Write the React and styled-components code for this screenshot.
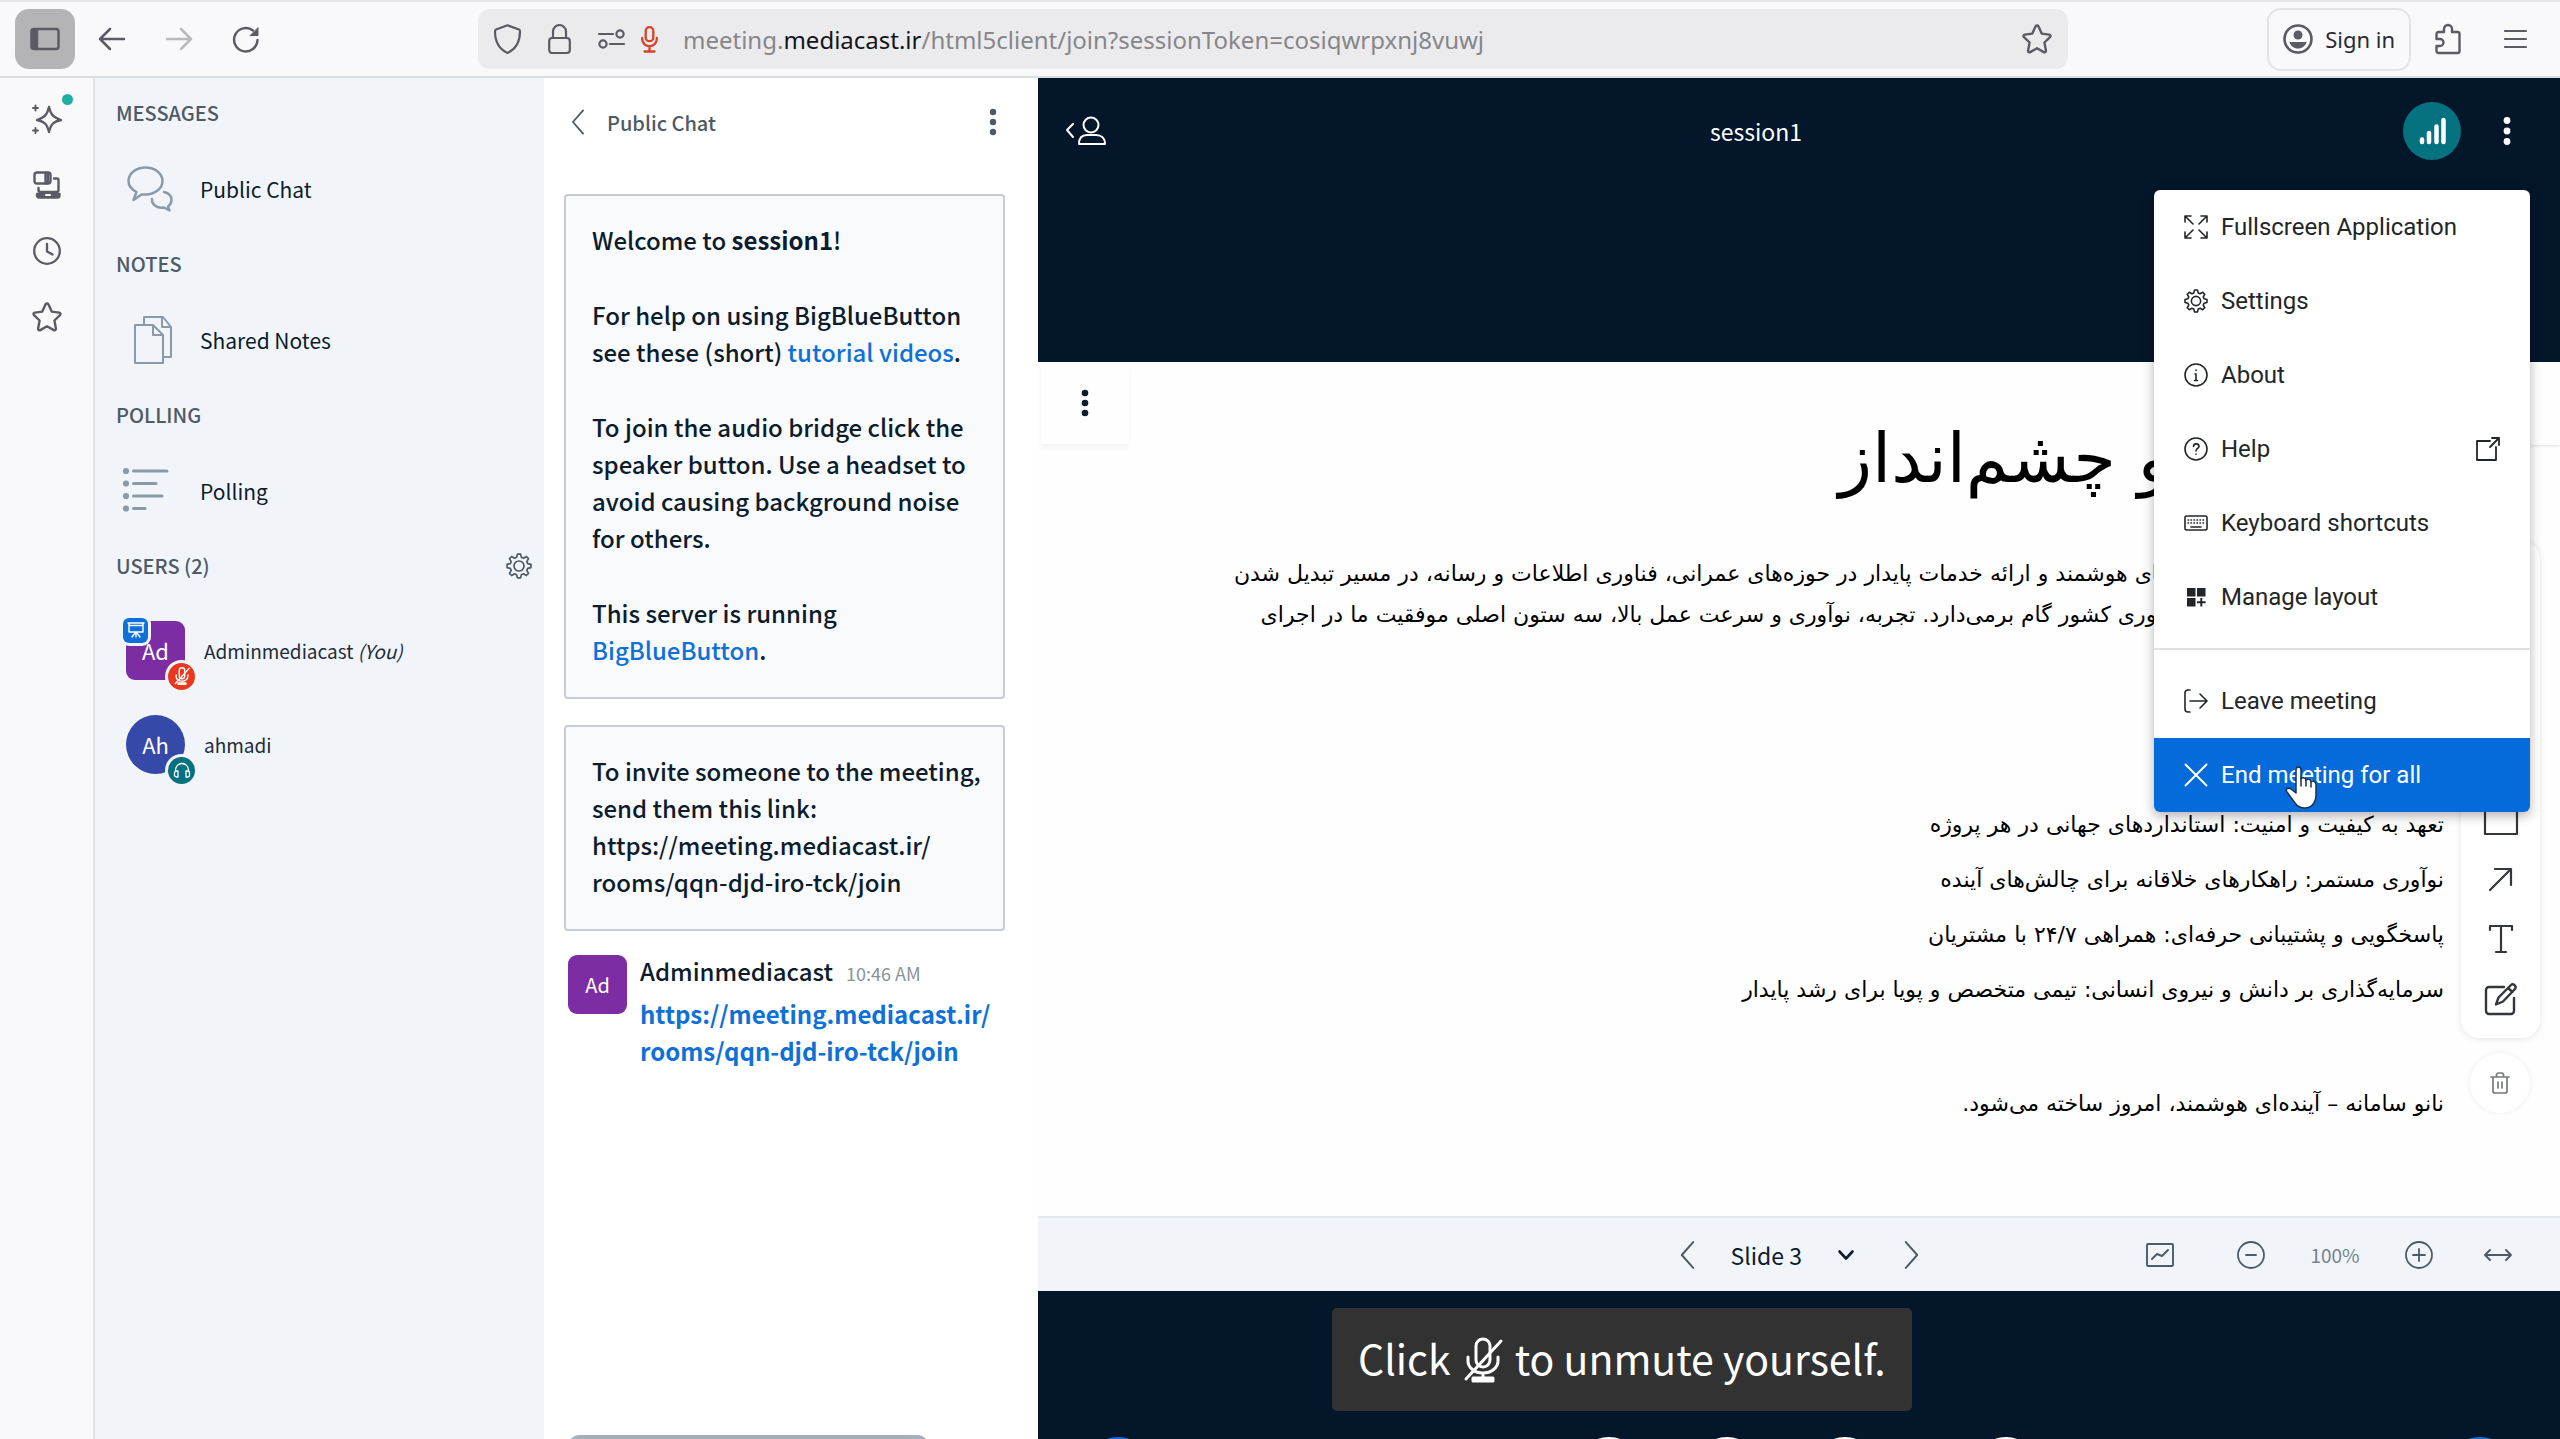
import React from 'react';
import styled, { createGlobalStyle, css } from 'styled-components';

const uiFont = `"Noto Sans CJK SC", "Noto Sans", sans-serif`;
const browserFont = `"Noto Sans", "Open Sans", sans-serif`;
const menuFont = `Roboto, "Liberation Sans", sans-serif`;
const slideFont = `"DejaVu Sans", sans-serif`;

const GlobalStyle = createGlobalStyle`
    * {
        box-sizing: border-box;
    }
    body {
        margin: 0;
        overflow: hidden;
        background: #f9f9fb;
        font-family: ${uiFont};
    }
    button {
        padding: 0;
        border: none;
        background: none;
        font: inherit;
        color: inherit;
        cursor: pointer;
    }
    h1, h2, p, ul {
        margin: 0;
        padding: 0;
        font-weight: inherit;
    }
    svg {
        display: block;
        flex: none;
        overflow: visible;
    }
`;

const Page = styled.div`
    height: 100vh;
    display: flex;
    flex-direction: column;
`;

/* ---------- browser toolbar ---------- */

const BrowserBar = styled.header`
    flex: none;
    height: 78px;
    display: flex;
    align-items: center;
    gap: 7px;
    padding: 0 15px;
    border-top: 2px solid #e8e8ea;
    border-bottom: 2px solid #dcdde0;
    background: #f9f9fb;
    color: #5b5b66;
    font-family: ${browserFont};
`;

const BrowserButton = styled.button`
    flex: none;
    width: 60px;
    height: 60px;
    display: flex;
    align-items: center;
    justify-content: center;
    border-radius: 14px;
    background: ${props => (props.$active ? '#b4b4b6' : 'transparent')};
    opacity: ${props => (props.$faded ? 0.4 : 1)};
`;

const AddressBar = styled.div`
    flex: 1;
    min-width: 0;
    height: 60px;
    display: flex;
    align-items: center;
    margin: 0 192px 0 195px;
    padding: 0 16px;
    border-radius: 12px;
    background: #ebebed;
`;

const AddressIcons = styled.div`
    display: flex;
    align-items: center;
    gap: 27px;
    margin-right: 16px;
`;

const AddressText = styled.div`
    flex: 1;
    margin-left: 25px;
    padding-top: 2px;
    font-size: 24px;
    line-height: 40px;
    color: #868689;
    white-space: nowrap;
    overflow: hidden;
`;

const AddressHost = styled.span`
    color: #15141a;
`;

const SignInButton = styled.button`
    flex: none;
    height: 63px;
    display: flex;
    align-items: center;
    gap: 12px;
    padding: 0 14px;
    border: 2px solid #e4e4e7;
    border-radius: 14px;
    font-size: 22px;
    color: #2b2a33;
    svg {
        color: #5b5b66;
    }
`;

const Body = styled.div`
    flex: 1;
    min-height: 0;
    display: flex;
`;

const BrowserRail = styled.nav`
    flex: none;
    width: 95px;
    display: flex;
    flex-direction: column;
    align-items: center;
    gap: 6px;
    padding-top: 11px;
    border-right: 2px solid #e1e3e6;
    color: #5b5b66;
`;

const RailButton = styled(BrowserButton)`
    position: relative;
`;

const RailDot = styled.span`
    position: absolute;
    top: 5px;
    right: 4px;
    width: 11px;
    height: 11px;
    border-radius: 50%;
    background: #1cb0a0;
`;

/* ---------- user list ---------- */

const UserPanel = styled.aside`
    flex: none;
    width: 449px;
    padding: 17px 12px 0 21px;
    background: #f1f5fa;
`;

const SectionHead = styled.div`
    display: flex;
    align-items: center;
    justify-content: space-between;
    height: 36px;
    color: #4e5a66;
`;

const SectionTitle = styled.h2`
    font-size: 20px;
    font-weight: 500;
    line-height: 36px;
`;

const PanelItem = styled.button`
    width: 100%;
    height: 115px;
    display: flex;
    align-items: center;
    gap: 20px;
    padding-left: 4px;
    font-size: 21px;
    color: #0d1c2c;
    text-align: left;
`;

const PanelItemIcon = styled.span`
    width: 60px;
    display: flex;
    justify-content: center;
    color: #8b9aa8;
`;

const UserRow = styled.div`
    height: 94px;
    display: flex;
    align-items: center;
    gap: 19px;
    padding-left: 10px;
    font-size: 19px;
    color: #1f2c3a;
`;

const UserRows = styled.div`
    padding-top: 19px;
`;

const Avatar = styled.div`
    position: relative;
    flex: none;
    width: 59px;
    height: 59px;
    display: flex;
    align-items: center;
    justify-content: center;
    border-radius: ${props => (props.$round ? '50%' : '9px')};
    background: ${props => props.$color};
    font-size: ${props => (props.$small ? '20px' : '22px')};
    color: #ffffff;
`;

const AvatarBadge = styled.span`
    position: absolute;
    display: flex;
    align-items: center;
    justify-content: center;
    color: #ffffff;
    box-shadow: 0 0 0 3px #f1f5fa;
    ${props => props.$place === 'top' ? css`
        top: -3px;
        left: -3px;
        width: 25px;
        height: 25px;
        border-radius: 6px;
    ` : css`
        right: -10px;
        bottom: -10px;
        width: 27px;
        height: 27px;
        border-radius: 50%;
    `}
    background: ${props => props.$color};
`;

/* ---------- chat ---------- */

const ChatPanel = styled.section`
    flex: none;
    width: 494px;
    display: flex;
    flex-direction: column;
    padding: 0 33px 0 20px;
    background: #ffffff;
    overflow: hidden;
`;

const ChatHead = styled.div`
    flex: none;
    height: 88px;
    display: flex;
    align-items: center;
    justify-content: space-between;
    padding: 0 8px;
    color: #4e5a66;
`;

const ChatBack = styled.button`
    display: flex;
    align-items: center;
    gap: 23px;
    font-size: 20px;
    font-weight: 500;
`;

const ChatLog = styled.div`
    flex: 1;
    padding-top: 28px;
`;

const Notice = styled.div`
    display: flex;
    flex-direction: column;
    gap: 38px;
    margin-bottom: 26px;
    padding: 25px 16px 29px 26px;
    border: 2px solid #c5cdd4;
    border-radius: 4px;
    background: #f8fafc;
    font-size: 24px;
    font-weight: 500;
    line-height: 37px;
    color: #0d1c2c;
`;

const ChatLink = styled.a`
    color: #0f70d7;
    text-decoration: none;
`;

const Message = styled.div`
    display: flex;
    gap: 13px;
    margin-top: -2px;
    padding-left: 4px;
`;

const MessageHead = styled.div`
    display: flex;
    align-items: baseline;
    gap: 13px;
    height: 40px;
    line-height: 32px;
    font-size: 24px;
    font-weight: 500;
    color: #0d1c2c;
`;

const MessageTime = styled.time`
    font-size: 18px;
    font-weight: 400;
    color: #8a929a;
`;

const MessageText = styled.p`
    font-size: 24px;
    font-weight: 700;
    line-height: 37px;
`;

const ChatInput = styled.textarea`
    flex: none;
    width: 359px;
    height: 60px;
    margin: 0 0 -56px 5px;
    border: 4px solid #a6b0bb;
    border-radius: 10px;
    resize: none;
`;

/* ---------- meeting ---------- */

const Meeting = styled.main`
    flex: 1;
    min-width: 0;
    display: flex;
    flex-direction: column;
    background: #04162a;
`;

const MeetingHead = styled.div`
    position: relative;
    flex: none;
    height: 284px;
    padding: 24px 49px 0 27px;
    color: #ffffff;
`;

const MeetingNav = styled.div`
    display: flex;
    align-items: center;
    height: 58px;
`;

const MeetingTitle = styled.h1`
    flex: 1;
    padding-left: 3px;
    text-align: center;
    font-size: 23px;
    line-height: 32px;
`;

const SignalButton = styled.button`
    width: 58px;
    height: 58px;
    display: flex;
    align-items: center;
    justify-content: center;
    margin-right: 42px;
    border-radius: 50%;
    background: #06727f;
`;

const Menu = styled.div`
    position: absolute;
    z-index: 2;
    top: 112px;
    right: 30px;
    width: 376px;
    border-radius: 6px;
    background: #ffffff;
    box-shadow: 0 4px 12px rgba(0, 0, 0, 0.3);
    font-family: ${menuFont};
    overflow: hidden;
`;

const MenuItem = styled.button`
    position: relative;
    width: 100%;
    height: 74px;
    display: flex;
    align-items: center;
    gap: 13px;
    padding: 0 30px;
    font-size: 24px;
    color: ${props => (props.$active ? '#ffffff' : '#232629')};
    background: ${props => (props.$active ? '#056bdb' : 'transparent')};
`;

const MenuLabel = styled.span`
    flex: 1;
    text-align: left;
`;

const MenuLine = styled.hr`
    height: 2px;
    margin: 14px 0;
    border: none;
    background: #dfe1e3;
`;

const Pointer = styled.svg`
    position: absolute;
    top: 28px;
    left: 131px;
`;

const Slide = styled.section`
    position: relative;
    flex: 1;
    min-height: 0;
    background: #fefefe;
    overflow: hidden;
`;

const SlideOptions = styled.button`
    position: absolute;
    top: 0;
    left: 3px;
    width: 88px;
    height: 82px;
    display: flex;
    align-items: center;
    justify-content: center;
    color: #0d1c2c;
    box-shadow: 0 4px 4px rgba(0, 0, 0, 0.04);
`;

const SlideCorner = styled.div`
    position: absolute;
    top: 0;
    right: 0;
    width: 150px;
    height: 83px;
    box-shadow: 0 1px 3px rgba(0, 0, 0, 0.12);
`;

const SlideText = styled.div`
    display: flex;
    flex-direction: column;
    padding: 46px 116px 0 100px;
    font-family: ${slideFont};
    font-size: 22px;
    color: #000000;
    white-space: nowrap;
`;

const SlideTitle = styled.h2`
    font-size: 69px;
    line-height: 100px;
`;

const SlideParagraph = styled.p`
    padding-top: 45px;
    line-height: 41px;
`;

const SlideList = styled.ul`
    padding-top: 162px;
    line-height: 55px;
    list-style: none;
`;

const SlideClosing = styled.p`
    padding-top: 59px;
    line-height: 55px;
`;

const DrawTools = styled.div`
    position: absolute;
    top: 179px;
    right: 20px;
    width: 79px;
    height: 497px;
    display: flex;
    flex-direction: column;
    align-items: center;
    justify-content: flex-end;
    border-radius: 18px;
    background: #ffffff;
    box-shadow: 0 1px 6px rgba(0, 0, 0, 0.1);
    color: #33373b;
`;

const DrawTool = styled.button`
    width: 60px;
    height: 60px;
    display: flex;
    align-items: center;
    justify-content: center;
    &:last-child {
        margin-bottom: 9px;
    }
`;

const TrashButton = styled.button`
    position: absolute;
    top: 691px;
    right: 30px;
    width: 60px;
    height: 60px;
    display: flex;
    align-items: center;
    justify-content: center;
    border-radius: 50%;
    background: #ffffff;
    box-shadow: 0 0 5px rgba(0, 0, 0, 0.07);
    color: #77797c;
`;

const SlideBar = styled.div`
    flex: none;
    height: 75px;
    display: grid;
    grid-template-columns: 1fr auto 1fr;
    align-items: center;
    border-top: 2px solid #e4e9ef;
    background: #f1f5fa;
    color: #4e5a66;
`;

const SlideNav = styled.div`
    grid-column: 2;
    display: flex;
    align-items: center;
    gap: 34px;
`;

const SlidePick = styled.label`
    display: grid;
    align-items: center;
    width: 141px;
    color: #0d1c2c;
    > * {
        grid-area: 1 / 1;
    }
    svg {
        justify-self: end;
        margin-right: 16px;
        pointer-events: none;
    }
`;

const SlideSelect = styled.select`
    width: 100%;
    height: 40px;
    padding: 0 0 0 2px;
    border: none;
    background: transparent;
    appearance: none;
    font-family: ${uiFont};
    font-size: 23px;
    color: #0d1c2c;
`;

const ZoomTools = styled.div`
    display: flex;
    align-items: center;
    justify-content: flex-end;
    gap: 45px;
    padding-right: 48px;
    button:first-child {
        margin-right: 18px;
    }
    button:last-child {
        margin-left: 6px;
    }
`;

const ZoomValue = styled.span`
    width: 50px;
    text-align: center;
    font-size: 19px;
    color: #75818d;
`;

const ActionsBar = styled.footer`
    position: relative;
    flex: none;
    height: 148px;
    padding-top: 146px;
    overflow: hidden;
`;

const Toast = styled.div`
    position: absolute;
    top: 17px;
    left: 294px;
    height: 103px;
    display: flex;
    align-items: center;
    gap: 12px;
    padding: 0 26px 6px;
    border-radius: 5px;
    background: #323232;
    font-size: 41px;
    color: #ffffff;
    white-space: nowrap;
    svg {
        margin-top: 6px;
    }
`;

const Actions = styled.div`
    display: flex;
    justify-content: space-between;
    padding: 0 48px;
`;

const ActionGroup = styled.div`
    display: flex;
    gap: 54px;
    padding-left: 16px;
    button:last-child {
        margin-left: 43px;
    }
`;

const ActionButton = styled.button`
    width: 64px;
    height: 64px;
    border-radius: 50%;
    background: ${props => (props.$primary ? '#0f70d7' : 'transparent')};
    border: 2px solid ${props => (props.$primary ? '#0f70d7' : '#ffffff')};
`;

/* ---------- icons ---------- */

const Icon = ({ w = 28, h = w, box = `0 0 ${w} ${h}`, stroke = 2, children }) => (
    <svg width={w} height={h} viewBox={box} fill="none" stroke="currentColor" strokeWidth={stroke} strokeLinecap="round" strokeLinejoin="round" aria-hidden="true">
        {children}
    </svg>
);

const DotsIcon = ({ r = 3, step = 10 }) => (
    <Icon w={8} h={30} stroke={0}>
        {[-1, 0, 1].map(n => <circle key={n} cx="4" cy={15 + n * step} r={r} fill="currentColor" />)}
    </Icon>
);

const gearPath = () => {
    const points = [];
    for (let i = 0; i < 8; i++) {
        const a = (i * Math.PI) / 4;
        [[-0.27, 9], [-0.13, 12], [0.13, 12], [0.27, 9]].forEach(([d, r]) => {
            points.push(`${(13 + r * Math.sin(a + d)).toFixed(2)} ${(13 - r * Math.cos(a + d)).toFixed(2)}`);
        });
    }
    return `M${points.join('L')}Z`;
};

const GearIcon = ({ size = 26, stroke = 2 }) => (
    <Icon w={size} box="0 0 26 26" stroke={stroke}>
        <path d={gearPath()} />
        <circle cx="13" cy="13" r="5" />
    </Icon>
);

const ChevronIcon = ({ right, stroke = 2, w = 13, h = 27 }) => (
    <Icon w={w} h={h} box="0 0 13 27" stroke={stroke}>
        <path d={right ? 'M1 1L12 13.5L1 26' : 'M12 1L1 13.5L12 26'} />
    </Icon>
);

const StarIcon = () => (
    <Icon w={30} box="0 0 30 30" stroke={2.4}>
        <path d="M13.6 2.3a1.6 1.6 0 0 1 2.8 0l3.3 7.3 7.5 1a1.5 1.5 0 0 1 .8 2.6l-5.6 5.3 1.5 8a1.5 1.5 0 0 1-2.2 1.6L15 24.2l-6.7 3.9a1.5 1.5 0 0 1-2.2-1.6l1.5-8L2 13.2a1.5 1.5 0 0 1 .8-2.6l7.5-1z" />
    </Icon>
);

const ArrowIcon = ({ right }) => (
    <Icon w={26} h={24} stroke={2.5}>
        <path d={right ? 'M1 12h24M15 2l10 10-10 10' : 'M25 12H1M11 2L1 12l10 10'} />
    </Icon>
);

const MutedMicIcon = ({ w, h, stroke }) => (
    <Icon w={w} h={h} box="0 0 40 46" stroke={stroke}>
        <rect x="13" y="2" width="14" height="28" rx="7" />
        <path d="M5 20v4a15 12 0 0 0 30 0v-4M20 36v5M10 41h20v3H10zM38 4L3 42" />
    </Icon>
);

const PublicChatIcon = () => (
    <Icon w={46} h={46} stroke={2.5}>
        <path d="M9.5 26C4 23 1.5 19 1.5 15 1.5 7.5 9 1.5 18.5 1.5S35.5 7.5 35.5 15s-7.5 13.5-17 13.5h-4L6.5 34z" />
        <path d="M37 26c4.5 1 7.5 4 7.5 8 0 2.5-1.5 5-3.5 6.5l1.5 4-5.5-3c-7 1-12.5-3-12-8.5" />
    </Icon>
);

const NotesIcon = () => (
    <Icon w={38} h={48} box="-3 0 38 48" stroke={2}>
        <path d="M10 9V1h19l8 10v30h-8M28 1v10h9" />
        <path d="M1 9h18l10 10v28H1zM19 9v10h10" />
    </Icon>
);

const PollIcon = () => (
    <Icon w={46} h={44} box="4 1 46 44" stroke={3}>
        {[[3, 44], [15.5, 33], [28, 39], [40.5, 22]].map(([y, x]) => (
            <g key={y}>
                <circle cx="3" cy={y} r="1.6" fill="currentColor" />
                <path d={`M10.5 ${y}H${x}`} />
            </g>
        ))}
    </Icon>
);

const menuIcons = {
    fullscreen: <path d="M1 7V1h6M1 1l8 8M17 1h6v6M23 1l-8 8M1 17v6h6M1 23l8-8M23 17v6h-6M23 23l-8-8" />,
    about: (
        <>
            <circle cx="12" cy="12" r="11" />
            <path d="M12 11v6.5M12 7v.5M11 11h1M10.5 17.5h3" />
        </>
    ),
    help: (
        <>
            <circle cx="12" cy="12" r="11" />
            <path d="M9.5 9.5c0-3.5 5.5-3.5 5.5 0 0 2-3 2-3 4.5M12 17v.3" />
        </>
    ),
    keyboard: (
        <>
            <rect x="1" y="5" width="22" height="14" rx="1.5" />
            <path d="M4 9h16M4 12h16" strokeDasharray="0.5 2.5" />
            <path d="M7 16h10" />
        </>
    ),
    layout: <path stroke="none" fill="currentColor" d="M3 3h8.5v8.5H3zM13 3h8.5v8.5H13zM3 13h8.5v8.5H3zM16.3 13h2v3.3h3.3v2h-3.3v3.3h-2v-3.3H13v-2h3.3z" />,
    leave: <path d="M6 1H4C2 1 1 2 1 4v16c0 2 1 3 3 3h2M6 12h17M16 5l7 7-7 7" />,
    close: <path d="M1.5 1.5l21 21M22.5 1.5l-21 21" strokeWidth="2" />,
};

const menuItems = [
    { icon: 'fullscreen', label: 'Fullscreen Application' },
    { icon: 'settings', label: 'Settings' },
    { icon: 'about', label: 'About' },
    { icon: 'help', label: 'Help', external: true },
    { icon: 'keyboard', label: 'Keyboard shortcuts' },
    { icon: 'layout', label: 'Manage layout' },
];

const sections = [
    { title: 'MESSAGES', label: 'Public Chat', icon: <PublicChatIcon /> },
    { title: 'NOTES', label: 'Shared Notes', icon: <NotesIcon /> },
    { title: 'POLLING', label: 'Polling', icon: <PollIcon /> },
];

const promises = [
    'تعهد به کیفیت و امنیت: استانداردهای جهانی در هر پروژه',
    'نوآوری مستمر: راهکارهای خلاقانه برای چالش‌های آینده',
    'پاسخگویی و پشتیبانی حرفه‌ای: همراهی ۲۴/۷ با مشتریان',
    'سرمایه‌گذاری بر دانش و نیروی انسانی: تیمی متخصص و پویا برای رشد پایدار',
];

const MenuIcon = ({ name }) => (
    name === 'settings'
        ? <GearIcon size={24} stroke={1.7} />
        : <Icon w={24} stroke={1.6}>{menuIcons[name]}</Icon>
);

const BrowserToolbar = () => (
    <BrowserBar>
        <BrowserButton $active aria-label="Toggle sidebar">
            <Icon w={30} h={24} stroke={2.5}>
                <rect x="1.5" y="2" width="27" height="20" rx="2.5" />
                <path d="M2 3h5v18H2z" fill="currentColor" />
            </Icon>
        </BrowserButton>
        <BrowserButton aria-label="Back"><ArrowIcon /></BrowserButton>
        <BrowserButton $faded aria-label="Forward"><ArrowIcon right /></BrowserButton>
        <BrowserButton aria-label="Reload">
            <Icon w={26} stroke={2.4}>
                <path d="M24.5 14A11.7 11.7 0 1 1 20 4.5" />
                <path d="M25 2v7.5h-7.5z" fill="currentColor" strokeWidth="1" />
            </Icon>
        </BrowserButton>
        <AddressBar>
            <AddressIcons>
                <Icon w={27} h={30} stroke={2.2}>
                    <path d="M13.5 1.3L25 5.5c1 .4 1 1 1 2C26 17 22 25 13.5 29 5 25 1 17 1 7.5c0-1 0-1.6 1-2z" />
                </Icon>
                <Icon w={23} h={30} stroke={2.2}>
                    <rect x="1.2" y="14" width="20.6" height="15" rx="3" />
                    <path d="M5 14V7.5a6.5 6.5 0 0 1 13 0V14" />
                </Icon>
                <Icon w={27} h={20} stroke={2.2}>
                    <path d="M1 5h14M12 15h14" />
                    <circle cx="22" cy="5" r="3.6" />
                    <circle cx="5" cy="15" r="3.6" />
                </Icon>
            </AddressIcons>
            <svg width="17" height="27" viewBox="0 0 17 27" fill="none" stroke="#d5432b" strokeWidth="2.3" strokeLinecap="round" aria-hidden="true">
                <rect x="4.7" y="1.2" width="7.6" height="14" rx="3.8" />
                <path d="M1.2 12v1a7.3 7.3 0 0 0 14.6 0v-1M8.5 20v5.5M3.5 25.5h10" />
            </svg>
            <AddressText role="textbox" aria-label="Address">
                meeting.<AddressHost>mediacast.ir</AddressHost>/html5client/join?sessionToken=cosiqwrpxnj8vuwj
            </AddressText>
            <StarIcon />
        </AddressBar>
        <SignInButton>
            <Icon w={30} stroke={2.6}>
                <circle cx="15" cy="15" r="13.5" />
                <circle cx="15" cy="11" r="4.5" fill="currentColor" stroke="none" />
                <path d="M6.5 18h17c-1 4-4.5 6.5-8.5 6.5S7.5 22 6.5 18z" fill="currentColor" stroke="none" />
            </Icon>
            Sign in
        </SignInButton>
        <BrowserButton aria-label="Extensions">
            <Icon w={26} h={30} stroke={2.4}>
                <path d="M9 8V5a4 4 0 0 1 8 0v3h5.500a2 2 0 0 1 2 2v17a2 2 0 0 1-2 2h-19a2 2 0 0 1-2-2v-5H5a3.500 3.500 0 0 0 0-7H1.500v-5a2 2 0 0 1 2-2z" />
            </Icon>
        </BrowserButton>
        <BrowserButton aria-label="Open application menu">
            <Icon w={23} h={20} stroke={2.2}><path d="M1 2h21M1 10h21M1 18h21" /></Icon>
        </BrowserButton>
    </BrowserBar>
);

const Rail = () => (
    <BrowserRail>
        <RailButton aria-label="AI chatbot">
            <Icon w={30} h={30} stroke={2.4}>
                <path d="M17 3c2 8 4 10 12 13-8 2-10 4-12 12-2-8-4-10-12-12 8-3 10-5 12-13z" />
                <path d="M3.5 1.5v5M1 4h5M3.5 24v5M1 26.5h5" strokeWidth="2" />
            </Icon>
            <RailDot />
        </RailButton>
        <RailButton aria-label="Synced tabs">
            <Icon w={28} h={28} stroke={2.4}>
                <rect x="1.5" y="1.5" width="16" height="11" rx="2.5" />
                <path d="M12.5 2v10h2.5V2zM21 7.5h3a1.5 1.5 0 0 1 1.5 1.5v10c0 1.5-.5 2-2 2h-16c-1.5 0-2-.5-2-2v-2" />
                <path d="M4 23h22.5v1.5a2 2 0 0 1-2 2H6a2 2 0 0 1-2-2z" fill="currentColor" />
                <path d="M13 24h4" stroke="#f9f9fb" strokeWidth="2" />
            </Icon>
        </RailButton>
        <RailButton aria-label="History">
            <Icon w={28} stroke={2.3}>
                <circle cx="14" cy="14" r="12.8" />
                <path d="M14 7v7.5l5.5 3" />
            </Icon>
        </RailButton>
        <RailButton aria-label="Bookmarks"><StarIcon /></RailButton>
    </BrowserRail>
);

const UserList = () => (
    <UserPanel>
        {sections.map(section => (
            <section key={section.title}>
                <SectionHead><SectionTitle>{section.title}</SectionTitle></SectionHead>
                <PanelItem>
                    <PanelItemIcon>{section.icon}</PanelItemIcon>
                    {section.label}
                </PanelItem>
            </section>
        ))}
        <SectionHead>
            <SectionTitle>USERS (2)</SectionTitle>
            <button aria-label="Manage users"><GearIcon stroke={1.7} /></button>
        </SectionHead>
        <UserRows>
            <UserRow>
                <Avatar $color="#7d2da3">
                    Ad
                    <AvatarBadge $place="top" $color="#0f70d7">
                        <Icon w={18} stroke={1.4}><path d="M1 2h16M2 2v9h14V2M2 4.5h14M9 11v5M8 12l-3 4M10 12l3 4" /></Icon>
                    </AvatarBadge>
                    <AvatarBadge $color="#e8391f"><MutedMicIcon w={16} h={18} stroke={3.5} /></AvatarBadge>
                </Avatar>
                <span>Adminmediacast <i>(You)</i></span>
            </UserRow>
            <UserRow>
                <Avatar $round $color="#3549a8">
                    Ah
                    <AvatarBadge $color="#06727f">
                        <Icon w={18} h={17} stroke={1.3}>
                            <path d="M2.5 9V8a6.5 6.5 0 0 1 13 0v1M5 9v6H3.5a2 2 0 0 1-2-2v-2a2 2 0 0 1 2-2zM13 9v6h1.5a2 2 0 0 0 2-2v-2a2 2 0 0 0-2-2z" />
                        </Icon>
                    </AvatarBadge>
                </Avatar>
                <span>ahmadi</span>
            </UserRow>
        </UserRows>
    </UserPanel>
);

const Chat = () => (
    <ChatPanel>
        <ChatHead>
            <ChatBack><ChevronIcon w={12} h={26} />Public Chat</ChatBack>
            <button aria-label="Chat options"><DotsIcon r={3.2} step={10} /></button>
        </ChatHead>
        <ChatLog>
            <Notice>
                <p>Welcome to <b>session1</b>!</p>
                <p>For help on using BigBlueButton see these (short) <ChatLink href="#tutorials">tutorial videos</ChatLink>.</p>
                <p>To join the audio bridge click the speaker button. Use a headset to avoid causing background noise for others.</p>
                <p>This server is running <br /><ChatLink href="#bigbluebutton">BigBlueButton</ChatLink>.</p>
            </Notice>
            <Notice>
                <p>To invite someone to the meeting, send them this link:<br />https://meeting.mediacast.ir/<wbr />rooms/qqn-djd-iro-tck/join</p>
            </Notice>
            <Message>
                <Avatar $small $color="#7d2da3">Ad</Avatar>
                <div>
                    <MessageHead>Adminmediacast <MessageTime>10:46 AM</MessageTime></MessageHead>
                    <MessageText>
                        <ChatLink href="#join">https://meeting.mediacast.ir/<wbr />rooms/qqn-djd-iro-tck/join</ChatLink>
                    </MessageText>
                </div>
            </Message>
        </ChatLog>
        <ChatInput aria-label="Message" />
    </ChatPanel>
);

const OptionsMenu = () => (
    <Menu role="menu">
        {menuItems.map(item => (
            <MenuItem key={item.label} role="menuitem">
                <MenuIcon name={item.icon} />
                <MenuLabel>{item.label}</MenuLabel>
                {item.external && <Icon w={24} stroke={1.8}><path d="M14 4H1v19h19V10M14 10L23 1M16 1h7v7" /></Icon>}
            </MenuItem>
        ))}
        <MenuLine />
        <MenuItem role="menuitem">
            <MenuIcon name="leave" />
            <MenuLabel>Leave meeting</MenuLabel>
        </MenuItem>
        <MenuItem role="menuitem" $active>
            <MenuIcon name="close" />
            <MenuLabel>End meeting for all</MenuLabel>
            <Pointer width="34" height="43" viewBox="0 0 34 43" fill="#ffffff" stroke="#16324f" strokeWidth="1.5" strokeLinejoin="round" strokeLinecap="round">
                <path d="M11 27V4c0-4 5-4 5 0v9c1-2 4.500-1.500 5 1 1.500-1.500 4.500-1 5 1.500 2-1 5 0 5 3V29c0 8-5 13-11 13-5 0-8-2-10-5L2 26c-2-3 1-5 4-3z" />
                <path d="M16 12v8M21 14v6M26 16v5" fill="none" />
            </Pointer>
        </MenuItem>
    </Menu>
);

const SlideArea = () => (
    <Slide>
        <SlideText dir="rtl" lang="fa">
            <SlideTitle>مأموریت و چشم‌انداز</SlideTitle>
            <SlideParagraph>
                نانو سامانه با تمرکز بر فناوری‌های هوشمند و ارائه خدمات پایدار در حوزه‌های عمرانی، فناوری اطلاعات و رسانه، در مسیر تبدیل شدن<br />
                به یکی از برترین شرکت‌های فناوری کشور گام برمی‌دارد. تجربه، نوآوری و سرعت عمل بالا، سه ستون اصلی موفقیت ما در اجرای
            </SlideParagraph>
            <SlideList>
                {promises.map(text => <li key={text}>{text}</li>)}
            </SlideList>
            <SlideClosing>نانو سامانه – آینده‌ای هوشمند، امروز ساخته می‌شود.</SlideClosing>
        </SlideText>
        <SlideOptions aria-label="Presentation options"><DotsIcon r={3.3} step={10} /></SlideOptions>
        <SlideCorner />
        <DrawTools>
            <DrawTool aria-label="Rectangle">
                <Icon w={34} h={32} stroke={2.2}><path d="M1 1h32v30H1z" /></Icon>
            </DrawTool>
            <DrawTool aria-label="Arrow">
                <Icon w={24} h={24} stroke={2.2}><path d="M1 23L22 2M6 2h16v16" /></Icon>
            </DrawTool>
            <DrawTool aria-label="Text">
                <Icon w={24} h={28} stroke={2.2}><path d="M1 5V1h22v4M12 1v26M7 27h10" /></Icon>
            </DrawTool>
            <DrawTool aria-label="Note">
                <Icon w={32} h={32} stroke={2.4}>
                    <path d="M19 4H4a3 3 0 0 0-3 3v21a3 3 0 0 0 3 3h22a3 3 0 0 0 3-3V15" />
                    <path d="M26 2c2-2 6 1 4 4L18 18.5l-7 3 2.5-7zM23 5l4.5 4" />
                </Icon>
            </DrawTool>
        </DrawTools>
        <TrashButton aria-label="Delete all annotations">
            <Icon w={20} h={22} stroke={1.7}>
                <path d="M1 5h18M6.5 5V3a2 2 0 0 1 2-2h3a2 2 0 0 1 2 2v2M3 5v14a2 2 0 0 0 2 2h10a2 2 0 0 0 2-2V5M8 10v6M12 10v6" />
            </Icon>
        </TrashButton>
    </Slide>
);

const SlideControls = () => (
    <SlideBar>
        <SlideNav>
            <button aria-label="Previous slide"><ChevronIcon w={15} h={28} stroke={1.9} /></button>
            <SlidePick>
                <SlideSelect aria-label="Select slide" defaultValue="3">
                    <option value="3">Slide 3</option>
                </SlideSelect>
                <Icon w={16} h={10} stroke={2.6}><path d="M1.5 1.5L8 8.5l6.5-7" /></Icon>
            </SlidePick>
            <button aria-label="Next slide"><ChevronIcon right w={15} h={28} stroke={1.9} /></button>
        </SlideNav>
        <ZoomTools>
            <button aria-label="Show whiteboard">
                <Icon w={28} h={24} stroke={1.9}>
                    <rect x="1" y="1" width="26" height="22" rx="1" />
                    <path d="M6 16l5-5 5 2 6-6" />
                </Icon>
            </button>
            <button aria-label="Zoom out">
                <Icon w={28} stroke={1.8}><circle cx="14" cy="14" r="13" /><path d="M9 14h10" /></Icon>
            </button>
            <ZoomValue>100%</ZoomValue>
            <button aria-label="Zoom in">
                <Icon w={28} stroke={1.8}><circle cx="14" cy="14" r="13" /><path d="M8 14h12M14 8v12" /></Icon>
            </button>
            <button aria-label="Fit to width">
                <Icon w={28} h={12} stroke={1.9}><path d="M1 6h26M6 1L1 6l5 5M22 1l5 5-5 5" /></Icon>
            </button>
        </ZoomTools>
    </SlideBar>
);

const App = () => {
    return (
        <Page>
            <GlobalStyle />
            <BrowserToolbar />
            <Body>
                <Rail />
                <UserList />
                <Chat />
                <Meeting>
                    <MeetingHead>
                        <MeetingNav>
                            <button aria-label="Toggle user list">
                                <Icon w={41} h={30} stroke={2}>
                                    <path d="M8 8l-6 6 6 7" />
                                    <circle cx="26" cy="9" r="7.5" />
                                    <path d="M14 28c0-7 4-9 8-9h9c5 0 9 3 9 9z" />
                                </Icon>
                            </button>
                            <MeetingTitle>session1</MeetingTitle>
                            <SignalButton aria-label="Connection status">
                                <Icon w={27} h={28} stroke={4.5}>
                                    <path d="M3 25v-2.5M10 25v-9M17.5 25V9.5M24.5 25V3" />
                                </Icon>
                            </SignalButton>
                            <button aria-label="Options"><DotsIcon r={3.4} step={10.5} /></button>
                        </MeetingNav>
                        <OptionsMenu />
                    </MeetingHead>
                    <SlideArea />
                    <SlideControls />
                    <ActionsBar>
                        <Toast role="status">
                            Click <MutedMicIcon w={40} h={46} stroke={3} /> to unmute yourself.
                        </Toast>
                        <Actions>
                            <ActionButton $primary aria-label="Actions" />
                            <ActionGroup>
                                <ActionButton aria-label="Unmute" />
                                <ActionButton aria-label="Leave audio" />
                                <ActionButton aria-label="Share webcam" />
                                <ActionButton aria-label="Share screen" />
                            </ActionGroup>
                            <ActionButton $primary aria-label="Minimize presentation" />
                        </Actions>
                    </ActionsBar>
                </Meeting>
            </Body>
        </Page>
    );
};

export default App;
